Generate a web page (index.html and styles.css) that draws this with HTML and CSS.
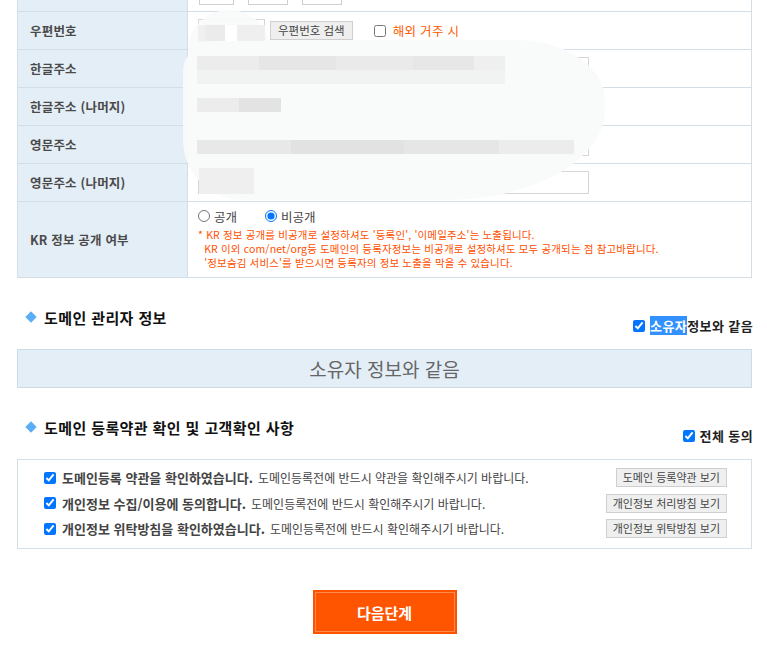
FILE: index.html
```html
<!DOCTYPE html>
<html lang="ko">
<head>
<meta charset="utf-8">
<link rel="stylesheet" href="styles.css">
</head>
<body>
<div class="wrap">
  <div class="form">
    <div class="row row-top">
      <div class="label"></div>
      <div class="field">
        <span class="stub s1"></span><span class="stub s2"></span><span class="stub s3"></span>
      </div>
    </div>
    <div class="row">
      <div class="label">우편번호</div>
      <div class="field">
        <span class="inp zip"></span>
        <button class="btn-gray zip-btn">우편번호 검색</button>
        <label class="abroad"><input type="checkbox"> 해외 거주 시</label>
      </div>
    </div>
    <div class="row">
      <div class="label">한글주소</div>
      <div class="field"><span class="inp long"></span></div>
    </div>
    <div class="row">
      <div class="label">한글주소 (나머지)</div>
      <div class="field"><span class="inp long"></span></div>
    </div>
    <div class="row">
      <div class="label">영문주소</div>
      <div class="field"><span class="inp long"></span></div>
    </div>
    <div class="row">
      <div class="label">영문주소 (나머지)</div>
      <div class="field"><span class="inp long"></span></div>
    </div>
    <div class="row row-kr">
      <div class="label">KR 정보 공개 여부</div>
      <div class="field kr">
        <div class="radios">
          <label><input type="radio" name="kr"> 공개</label>
          <label><input type="radio" name="kr" checked> 비공개</label>
        </div>
        <p class="note">* KR 정보 공개를 비공개로 설정하셔도 '등록인', '이메일주소'는 노출됩니다.<br>
        &nbsp;&nbsp;KR 이외 com/net/org등 도메인의 등록자정보는 비공개로 설정하셔도 모두 공개되는 점 참고바랍니다.<br>
        &nbsp;&nbsp;'정보숨김 서비스'를 받으시면 등록자의 정보 노출을 막을 수 있습니다.</p>
      </div>
    </div>
    <div class="blur">
      <span class="b-bump"></span><span class="b-main"></span>
      <span class="m m1"></span><span class="m m2"></span><span class="m m3"></span>
      <span class="m m4"></span><span class="m m5"></span><span class="m m6"></span>
    </div>
  </div>

  <div class="sec-head sec1">
    <h3 class="title"><span class="dia"></span>도메인 관리자 정보</h3>
    <label class="chk"><input type="checkbox" checked> <span class="sel">소유자</span>정보와 같음</label>
  </div>
  <div class="same">소유자 정보와 같음</div>

  <div class="sec-head sec2">
    <h3 class="title"><span class="dia"></span>도메인 등록약관 확인 및 고객확인 사항</h3>
    <label class="chk"><input type="checkbox" checked> 전체 동의</label>
  </div>
  <div class="agree">
    <div class="arow">
      <label><input type="checkbox" checked> <b>도메인등록 약관을 확인하였습니다.</b> <span class="sm">도메인등록전에 반드시 약관을 확인해주시기 바랍니다.</span></label>
      <button class="btn-gray">도메인 등록약관 보기</button>
    </div>
    <div class="arow">
      <label><input type="checkbox" checked> <b>개인정보 수집/이용에 동의합니다.</b> <span class="sm">도메인등록전에 반드시 확인해주시기 바랍니다.</span></label>
      <button class="btn-gray">개인정보 처리방침 보기</button>
    </div>
    <div class="arow">
      <label><input type="checkbox" checked> <b>개인정보 위탁방침을 확인하였습니다.</b> <span class="sm">도메인등록전에 반드시 확인해주시기 바랍니다.</span></label>
      <button class="btn-gray">개인정보 위탁방침 보기</button>
    </div>
  </div>

  <div class="next-wrap"><button class="next">다음단계</button></div>
</div>
</body>
</html>
```

FILE: styles.css
```css
* { box-sizing: border-box; }
html, body { margin: 0; padding: 0; background: #fff; }
body {
  font-family: "Noto Sans CJK KR", "Noto Sans", sans-serif;
  font-size: 12px;
  color: #333;
}
.wrap { width: 735px; margin-left: 17px; }

.form {
  position: relative;
  border-left: 1px solid #d3dee6;
  border-right: 1px solid #d3dee6;
  border-bottom: 1px solid #d3dee6;
}
.row {
  display: grid;
  grid-template-columns: 170px 1fr;
  height: 38px;
  border-bottom: 1px solid #d3dee6;
}
.row-top { height: 12px; }
.row-kr { height: 75px; border-bottom: none; }
.label {
  background: #e4eef7;
  border-right: 1px solid #d3dee6;
  display: flex;
  align-items: center;
  padding-left: 12px;
  font-weight: bold;
  color: #4a4a4a;
  font-size: 12.5px;
  letter-spacing: 0.2px;
}
.field {
  display: flex;
  align-items: center;
  padding-left: 10px;
}
.row-top .field { align-items: flex-start; gap: 14px; padding-left: 11px; }
.stub {
  display: block;
  height: 5px;
  border: 1px solid #cfcfcf;
  border-top: none;
}
.s1 { width: 35px; }
.s2 { width: 40px; }
.s3 { width: 40px; }

.inp {
  display: block;
  height: 23px;
  border: 1px solid #d6d6d6;
  background: #fff;
}
.zip { width: 67px; }
.long { width: 391px; }

.btn-gray {
  font-family: "Noto Sans CJK KR", sans-serif;
  font-size: 11px;
  color: #444;
  background: #efefef;
  border: 1px solid #cfcfcf;
  height: 19px;
  padding: 0 6px;
  line-height: 17px;
  cursor: pointer;
}
.zip-btn { margin-left: 5px; font-size: 11.5px; padding: 0 7px; }
.abroad {
  margin-left: 21px;
  color: #ff5a00;
  display: flex;
  align-items: center;
  font-size: 12.5px;
  letter-spacing: 0.3px;
}
.abroad input { margin: 0 7px 0 0; width: 12px; height: 12px; }

.kr { flex-direction: column; align-items: flex-start; justify-content: flex-start; padding-top: 6px; }
.radios { display: flex; gap: 28px; height: 16px; align-items: center; font-size: 12.5px; color: #444; }
.radios label { display: flex; align-items: center; gap: 4px; }
.radios input { margin: 0; width: 12px; height: 12px; }
.note {
  margin: 4px 0 0 0;
  color: #ff5000;
  font-size: 10.5px;
  line-height: 14px;
  letter-spacing: 0.15px;
}

.blur {
  position: absolute;
  left: 165px;
  top: 10px;
  width: 422px;
  height: 190px;
}
.b-bump {
  position: absolute;
  left: 5px;
  top: 0;
  width: 82px;
  height: 80px;
  border-radius: 41px;
  background: rgba(249, 250, 250, 0.93);
}
.b-main {
  position: absolute;
  left: 0;
  top: 30px;
  width: 422px;
  height: 160px;
  background: rgba(249, 250, 250, 0.96);
  border-radius: 40px 90px 160px 60px / 30px 60px 90px 60px;
}
.m { position: absolute; display: block; }
.m1 { left: 15px; top: 15px; width: 67px; height: 16px; background: linear-gradient(90deg, #f0f0f0 0 10%, #ebebeb 10% 40%, #fff 40% 58%, #efefef 58%); }
.m2 { left: 14px; top: 46px; width: 308px; height: 14px; background: linear-gradient(90deg, #ececec 0 20%, #e6e6e6 20% 45%, #eaeaea 45% 70%, #e7e7e7 70% 90%, #efefef 90%); }
.m3 { left: 14px; top: 60px; width: 308px; height: 14px; background: #f1f2f2; }
.m4 { left: 14px; top: 88px; width: 84px; height: 14px; background: linear-gradient(90deg, #ececec 0 50%, #e3e3e3 50%); }
.m5 { left: 14px; top: 130px; width: 377px; height: 14px; background: linear-gradient(90deg, #e8e8e8 0 25%, #e2e2e2 25% 55%, #e6e6e6 55% 80%, #ececec 80%); }
.m6 { left: 16px; top: 158px; width: 55px; height: 26px; background: #efefef; }

.sec-head {
  display: flex;
  justify-content: space-between;
  align-items: flex-end;
  margin-top: 29px;
  height: 42px;
  padding-bottom: 14px;
}
.title {
  margin: 0;
  align-self: flex-start;
  font-size: 15px;
  letter-spacing: 0.4px;
  font-weight: bold;
  color: #111;
  display: flex;
  align-items: center;
  padding-left: 10px;
  height: 20px;
}
.dia {
  display: inline-block;
  width: 8px;
  height: 8px;
  background: #5aaef7;
  transform: rotate(45deg);
  margin-right: 9px;
}
.chk {
  display: flex;
  align-items: center;
  font-weight: bold;
  color: #222;
  font-size: 13px;
  letter-spacing: 0.4px;
  margin-right: -1px;
}
.chk input { margin: 0 5px 0 0; width: 12px; height: 12px; }
.sel { background: #3390ff; color: #fff; }

.same {
  height: 39px;
  background: #e4eef7;
  border: 1px solid #ccdce6;
  display: flex;
  align-items: center;
  justify-content: center;
  font-size: 19px;
  color: #666;
}

.agree {
  border: 1px solid #d3e0e6;
  height: 90px;
  padding: 5px 24px 0 26px;
}
.arow {
  display: flex;
  justify-content: space-between;
  align-items: center;
  height: 25.5px;
}
.arow label { display: flex; align-items: center; color: #444; font-size: 12px; }
.arow input { margin: 0 6px 0 0; width: 12px; height: 12px; }
.arow b { color: #444; margin-right: 5px; font-size: 13px; }
.arow .sm { font-size: 12px; color: #444; }

.next-wrap { display: flex; justify-content: center; margin-top: 41px; }
.next {
  width: 144px;
  height: 44px;
  background: #ff5500;
  border: 1px solid #ff5000;
  box-shadow: inset 0 0 0 1px #ff5500, inset 0 0 0 2px #ff8a50;
  color: #fff;
  font-family: "Noto Sans CJK KR", sans-serif;
  font-size: 15px;
  font-weight: bold;
  cursor: pointer;
}
```
